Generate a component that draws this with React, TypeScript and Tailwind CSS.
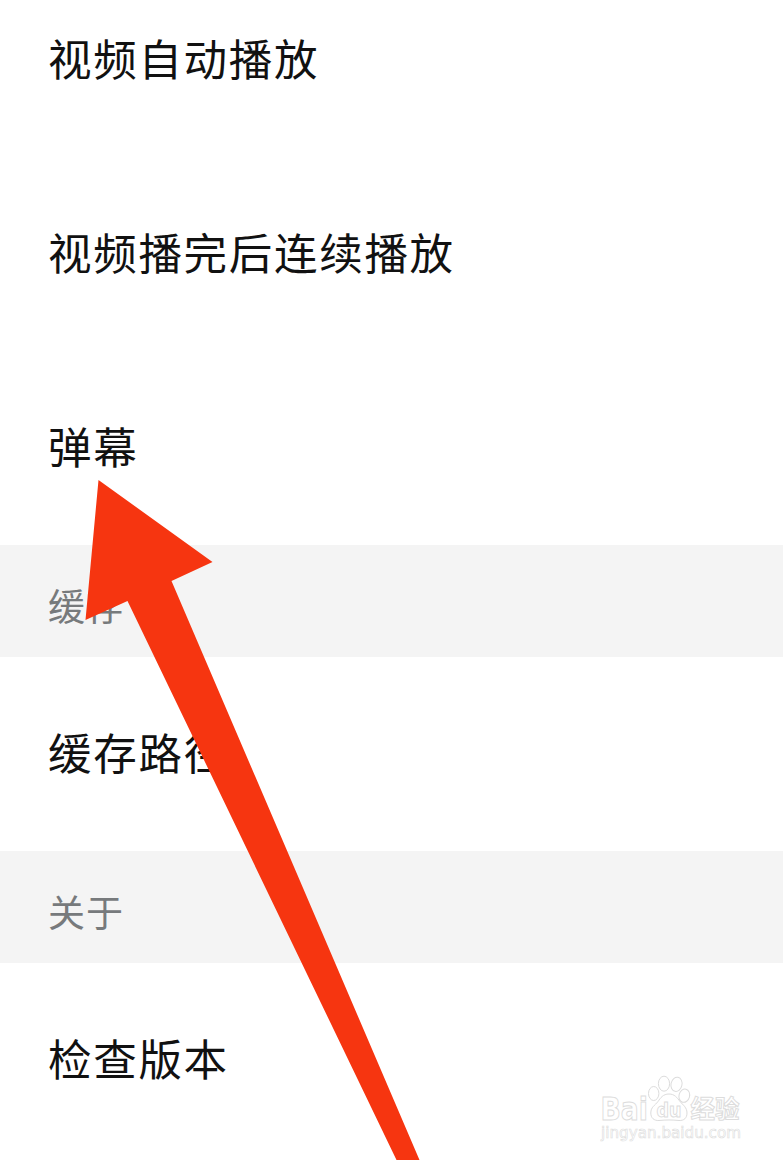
import React from 'react'

const rows = [
  { label: '视频自动播放', className: 'h-[157px] pb-[42px]' },
  { label: '视频播完后连续播放', className: 'h-[194px] pb-1' },
  { label: '弹幕', className: 'h-[194px] pb-1' }
]

const Row = ({ label, className }: { label: string; className: string }) => (
  <div className={`flex items-center px-12 text-[43.5px] tracking-[1.7px] text-[#111] ${className}`}>{label}</div>
)

const SectionTitle = ({ label }: { label: string }) => (
  <div className="flex h-28 items-center bg-[#f4f4f4] px-12 pt-2.5 text-[37px] tracking-[0.9px] text-[#777a7c]">{label}</div>
)

const Arrow = () => (
  <svg className="absolute inset-0" width="783" height="1160" viewBox="0 0 783 1160">
    <path d="M98.5 480L212.5 562L171.5 581L419.5 1160H396.5L127.5 601L85.5 620Z" fill="#f63510" />
  </svg>
)

const Watermark = () => (
  <svg
    className="absolute left-[600px] top-[1075px] font-['Liberation_Sans','Noto_Sans_CJK_SC',sans-serif] font-bold"
    width="150"
    height="72"
    viewBox="0 0 150 72"
    fill="#fff"
    stroke="#dcdcdc"
    strokeWidth="1"
  >
    {/* Paw */}
    <ellipse cx="53.7" cy="18.5" rx="5.2" ry="7" />
    <ellipse cx="64" cy="8.7" rx="5.6" ry="7.5" />
    <ellipse cx="76.5" cy="9.3" rx="5.5" ry="7.2" transform="rotate(12 76.5 9.3)" />
    <ellipse cx="84.3" cy="20.7" rx="5.3" ry="6.7" transform="rotate(15 84.3 20.7)" />
    <path d="M69 19C63 19 60.5 23 58 26.5C55 30.5 50.8 32 50.8 38C50.8 43 54 45.8 59 45.5C66 44.8 72 44.8 79 45.5C84 45.8 87 43 87 38C87 32.5 83 30 80 26.5C77 22.5 74.5 19 69 19Z" />

    <text x="0.5" y="44.5" fontSize="32" textLength="47.5" lengthAdjust="spacingAndGlyphs" className="font-['DejaVu_Sans',sans-serif]">
      Bai
    </text>
    <text x="56.5" y="42" fontSize="19.5" textLength="25" lengthAdjust="spacingAndGlyphs" className="font-['DejaVu_Sans',sans-serif]">
      du
    </text>
    <text x="90.5" y="42.5" fontSize="25" textLength="49" lengthAdjust="spacingAndGlyphs">
      经验
    </text>
    <text x="1" y="63" fontSize="15.5" strokeWidth="0.6" textLength="140" lengthAdjust="spacingAndGlyphs" className="font-['DejaVu_Sans',sans-serif] font-normal">
      jingyan.baidu.com
    </text>
  </svg>
)

export default function App() {
  return (
    <main className="relative h-[1160px] w-[783px] overflow-hidden bg-white font-['Noto_Sans_CJK_SC',sans-serif]">
      {rows.map((row) => (
        <Row key={row.label} {...row} />
      ))}
      <SectionTitle label="缓存" />
      <Row label="缓存路径" className="h-[194px] pb-1" />
      <SectionTitle label="关于" />
      <Row label="检查版本" className="h-[194px] pb-1" />
      <Arrow />
      <Watermark />
    </main>
  )
}
